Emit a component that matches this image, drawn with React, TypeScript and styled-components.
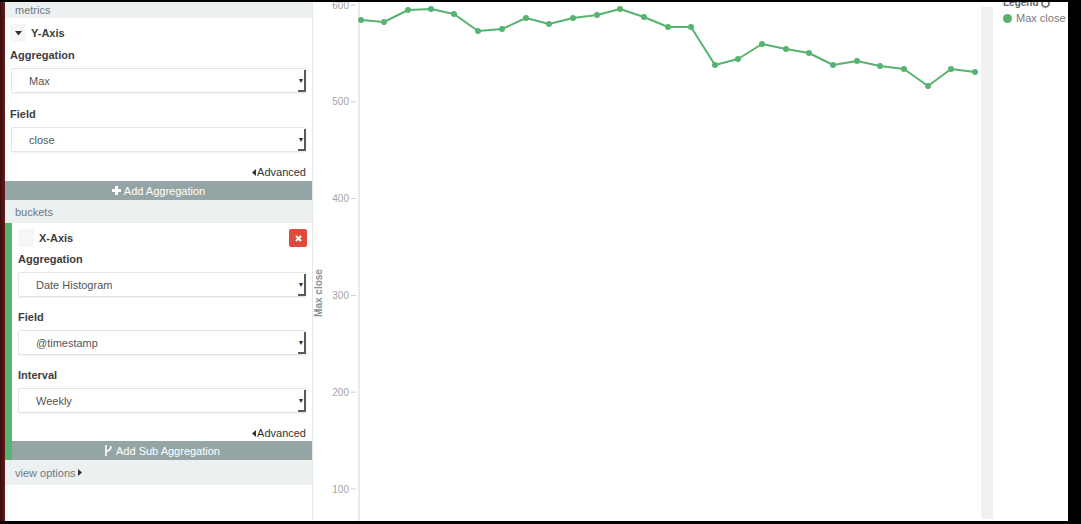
import styled, { createGlobalStyle } from 'styled-components'

const GlobalStyle = createGlobalStyle`
  html, body {
    margin: 0;
    padding: 0;
    background: #000;
  }
  body {
    font-family: "Liberation Sans", Arial, sans-serif;
    font-size: 11px;
    color: #444;
  }
`

const Frame = styled.div`
  width: 1068px;
  height: 519px;
  margin-top: 2px;
  display: flex;
  background: #fff;
  overflow: hidden;
`

const EdgeStrip = styled.div`
  width: 5px;
  flex: none;
  background: linear-gradient(to right, #3c0c0c, #641c1c);
`

const Sidebar = styled.div`
  width: 307px;
  flex: none;
  display: flex;
  flex-direction: column;
  border-right: 1px solid #e6e8e8;
`

const SectionHeader = styled.div<{ h: number }>`
  height: ${p => p.h}px;
  display: flex;
  align-items: center;
  padding-left: 10px;
  background: #ecf0f1;
  color: #6c7a7d;
  font-size: 11px;
`

const AggBlock = styled.div<{ bucket?: boolean }>`
  display: flex;
  flex-direction: column;
  padding: ${p => (p.bucket ? '4px 6px 0 6px' : '4px 6px 0 5px')};
  border-left: ${p => (p.bucket ? '7px solid #57b36f' : 'none')};
  margin-left: ${p => (p.bucket ? '0' : '0')};
`

const AggHeader = styled.div`
  height: 22px;
  display: flex;
  align-items: center;
  gap: 5px;
`

const ToggleBox = styled.span`
  width: 16px;
  height: 18px;
  background: #f5f6f6;
  display: flex;
  align-items: center;
  justify-content: center;
  color: #333;
  font-size: 8px;
`

const AggTitle = styled.span`
  font-weight: bold;
  color: #3d3d3d;
  font-size: 11px;
  flex: 1;
`

const RemoveButton = styled.span`
  width: 18px;
  height: 18px;
  border-radius: 2px;
  background: #e04a3b;
  display: flex;
  align-items: center;
  justify-content: center;
  margin-right: -1px;
`

const Label = styled.div<{ top: number }>`
  margin-top: ${p => p.top}px;
  height: 14px;
  line-height: 14px;
  font-weight: bold;
  color: #3d3d3d;
  font-size: 11px;
`

const SelectBox = styled.div<{ inset: number }>`
  margin-top: 6px;
  margin-left: ${p => p.inset}px;
  height: 25px;
  box-sizing: border-box;
  border: 1px solid #e3e5e5;
  border-radius: 2px;
  box-shadow: 0 1px 2px rgba(0, 0, 0, 0.06);
  display: flex;
  align-items: center;
  padding-left: 17px;
  color: #555;
  font-size: 11px;
  position: relative;
`

const SelectText = styled.span`
  flex: 1;
`

const SelectArrow = styled.span`
  width: 8px;
  height: 22px;
  box-sizing: border-box;
  border-right: 2px solid #5a5a5a;
  border-bottom: 2px solid #5a5a5a;
  display: flex;
  align-items: center;
  justify-content: center;
  font-size: 7px;
  color: #333;
  margin-right: -1px;
  margin-top: 1px;
`

const AdvancedLink = styled.div`
  margin-top: 13px;
  height: 14px;
  line-height: 14px;
  text-align: right;
  color: #333;
  font-size: 11px;
`

const ActionButton = styled.div<{ top: number; outdent: number }>`
  margin-top: ${p => p.top}px;
  margin-left: -${p => p.outdent}px;
  margin-right: -6px;
  height: 19px;
  background: #95a5a6;
  color: #fff;
  font-size: 11px;
  display: flex;
  align-items: center;
  justify-content: center;
  gap: 3px;
`

const Filler = styled.div`
  flex: 1;
`

const ChartArea = styled.div`
  flex: 1;
  display: flex;
`

const PlotSvg = styled.svg`
  width: 668px;
  height: 519px;
  flex: none;
  display: block;
`

const ScrollBar = styled.div`
  width: 12px;
  flex: none;
  margin-top: 5px;
  margin-bottom: 2px;
  background: #f1f1f1;
`

const Legend = styled.div`
  flex: 1;
  padding-left: 10px;
  margin-top: -5px;
`

const LegendTitle = styled.div`
  height: 12px;
  line-height: 12px;
  font-weight: bold;
  color: #666;
  font-size: 10px;
  display: flex;
  align-items: center;
  gap: 2px;
`

const LegendItem = styled.div`
  margin-top: 3px;
  display: flex;
  align-items: center;
  gap: 4px;
  color: #7a7a7a;
  font-size: 11px;
`

const LegendDot = styled.span`
  width: 9px;
  height: 9px;
  border-radius: 50%;
  background: #57b36f;
`

const points: [number, number][] = [
  [361, 20], [384, 22], [408, 10], [431, 9], [454, 14], [478, 31], [502, 29],
  [526, 18], [549, 24], [573, 18], [597, 15], [620, 9], [644, 17], [668, 27],
  [691, 27], [715, 65], [738, 59], [762, 44], [786, 49], [809, 53], [833, 65],
  [857, 61], [880, 66], [904, 69], [928, 86], [951, 69], [975, 72]
]

const ticks = [600, 500, 400, 300, 200, 100]

function Caret() {
  return (
    <svg width="7" height="5" viewBox="0 0 7 5">
      <path d="M0 0 L7 0 L3.5 4.5 Z" fill="#333" />
    </svg>
  )
}

function Select({ value, inset }: { value: string; inset: number }) {
  return (
    <SelectBox inset={inset}>
      <SelectText>{value}</SelectText>
      <SelectArrow>▼</SelectArrow>
    </SelectBox>
  )
}

function Advanced() {
  return (
    <AdvancedLink>
      <svg width="4" height="7" viewBox="0 0 4 7" style={{ marginRight: 1 }}>
        <path d="M4 0 L4 7 L0 3.5 Z" fill="#333" />
      </svg>
      Advanced
    </AdvancedLink>
  )
}

function Chart() {
  const ox = 313
  const oy = 2
  const yOf = (v: number) => 5 + (600 - v) * 0.968 - oy
  const d = points.map(([x, y], i) => `${i ? 'L' : 'M'}${x - ox} ${y - oy}`).join(' ')
  return (
    <PlotSvg viewBox="0 0 668 519">
      <line x1="46" y1="0" x2="46" y2="519" stroke="#e9eaea" strokeWidth="2" />
      {ticks.map(t => (
        <g key={t}>
          <text x="36" y={yOf(t) + 3.5} textAnchor="end" fontSize="10" fill="#a3a3a3"
            fontFamily="Liberation Sans, Arial, sans-serif">{t}</text>
          <line x1="38" y1={yOf(t)} x2="43" y2={yOf(t)} stroke="#cfcfcf" strokeWidth="1" />
        </g>
      ))}
      <text transform="translate(9 291) rotate(-90)" textAnchor="middle" fontSize="10"
        fontWeight="bold" fill="#8a949b" fontFamily="Liberation Sans, Arial, sans-serif">Max close</text>
      <path d={d} fill="none" stroke="#57b36f" strokeWidth="2" strokeLinejoin="round" />
      {points.map(([x, y]) => (
        <circle key={x} cx={x - ox} cy={y - oy} r="3" fill="#57b36f" />
      ))}
    </PlotSvg>
  )
}

export default function App(): JSX.Element {
  return (
    <>
      <GlobalStyle />
      <Frame>
        <EdgeStrip />
        <Sidebar>
          <SectionHeader h={16}>metrics</SectionHeader>
          <AggBlock>
            <AggHeader>
              <ToggleBox><Caret /></ToggleBox>
              <AggTitle>Y-Axis</AggTitle>
            </AggHeader>
            <Label top={4}>Aggregation</Label>
            <Select value="Max" inset={1} />
            <Label top={14}>Field</Label>
            <Select value="close" inset={1} />
            <Advanced />
            <ActionButton top={2} outdent={5}>
              <svg width="9" height="9" viewBox="0 0 9 9">
                <path d="M3 0 H6 V3 H9 V6 H6 V9 H3 V6 H0 V3 H3 Z" fill="#fff" />
              </svg>
              Add Aggregation
            </ActionButton>
          </AggBlock>
          <SectionHeader h={23}>buckets</SectionHeader>
          <AggBlock bucket>
            <AggHeader>
              <ToggleBox />
              <AggTitle>X-Axis</AggTitle>
              <RemoveButton>
                <svg width="7" height="7" viewBox="0 0 7 7">
                  <path d="M1 1 L6 6 M6 1 L1 6" stroke="#fff" strokeWidth="2" />
                </svg>
              </RemoveButton>
            </AggHeader>
            <Label top={3}>Aggregation</Label>
            <Select value="Date Histogram" inset={0} />
            <Label top={13}>Field</Label>
            <Select value="@timestamp" inset={0} />
            <Label top={13}>Interval</Label>
            <Select value="Weekly" inset={0} />
            <Advanced />
            <ActionButton top={1} outdent={6}>
              <svg width="9" height="11" viewBox="0 0 9 11">
                <path d="M2 0 V11 M2 6 C5 6 7 5 7 1" stroke="#fff" strokeWidth="1.6" fill="none" />
              </svg>
              Add Sub Aggregation
            </ActionButton>
          </AggBlock>
          <SectionHeader h={25}>
            view options
            <svg width="4" height="7" viewBox="0 0 4 7" style={{ marginLeft: 2 }}>
              <path d="M0 0 L4 3.5 L0 7 Z" fill="#333" />
            </svg>
          </SectionHeader>
          <Filler />
        </Sidebar>
        <ChartArea>
          <Chart />
          <ScrollBar />
          <Legend>
            <LegendTitle>
              Legend
              <svg width="9" height="9" viewBox="0 0 9 9">
                <circle cx="4.5" cy="4.5" r="3.5" fill="none" stroke="#666" strokeWidth="1.6" />
              </svg>
            </LegendTitle>
            <LegendItem>
              <LegendDot />
              Max close
            </LegendItem>
          </Legend>
        </ChartArea>
      </Frame>
    </>
  )
}
